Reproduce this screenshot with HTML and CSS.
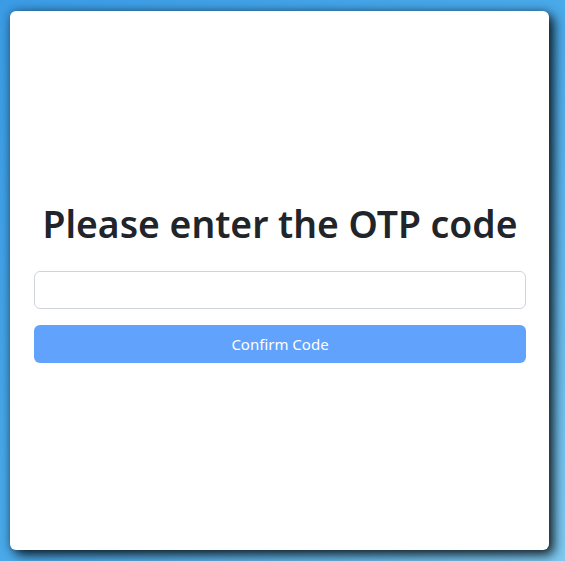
FILE: index.html
```html
<!DOCTYPE html>
<html lang="en">
<head>
<meta charset="utf-8">
<title>OTP</title>
<link rel="stylesheet" href="styles.css">
</head>
<body>
<div class="card">
  <div class="content">
    <h1 class="title">Please enter the OTP code</h1>
    <input class="otp-input" type="text" aria-label="OTP code">
    <button class="confirm-btn" type="button">Confirm Code</button>
  </div>
</div>
</body>
</html>
```

FILE: styles.css
```css
html, body {
  margin: 0;
  height: 100%;
}
body {
  background: linear-gradient(135deg, #3b9be4 0%, #4aa9e9 50%, #7fcaf2 100%);
  padding: 11px 16px 11px 10px;
  box-sizing: border-box;
  font-family: "Noto Sans", "Open Sans", sans-serif;
}
.card {
  width: 539px;
  height: 539px;
  background: #fff;
  border-radius: 6px;
  box-shadow: 5px 5px 12px rgba(0, 0, 0, 0.8), 0 0 10px rgba(0, 0, 0, 0.3);
  display: flex;
  flex-direction: column;
  justify-content: center;
  padding: 2px 23px 0 24px;
  box-sizing: border-box;
}
.content {
  display: flex;
  flex-direction: column;
}
.title {
  margin: 0 0 23px;
  font-size: 37.3px;
  font-weight: 600;
  line-height: 48px;
  color: #212529;
  text-align: center;
}
.otp-input {
  height: 38px;
  box-sizing: border-box;
  border: 1px solid #ced4da;
  border-radius: 6px;
  margin: 0 0 16px;
  padding: 6px 12px;
  font: inherit;
  font-size: 16px;
}
.confirm-btn {
  height: 38px;
  border: none;
  border-radius: 6px;
  background: #61a2fd;
  color: #fff;
  font-family: inherit;
  font-size: 15px;
  padding-top: 1px;
  cursor: pointer;
}
```
